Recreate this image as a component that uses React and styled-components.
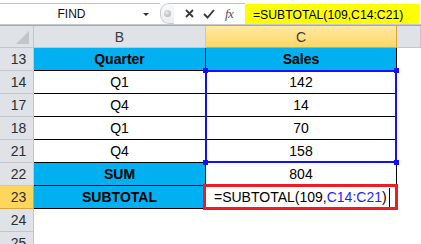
import React from 'react';
import styled, { createGlobalStyle } from 'styled-components';

const GlobalStyle = createGlobalStyle`
  html, body {
    margin: 0;
    padding: 0;
    background: #ffffff;
  }
  body {
    font-family: 'Liberation Sans', Arial, sans-serif;
    width: 421px;
    height: 244px;
    overflow: hidden;
  }
`;

const Sheet = styled.div`
  width: 421px;
  height: 244px;
  display: flex;
  flex-direction: column;
  background: #fff;
`;

const FormulaBar = styled.div`
  height: 28px;
  display: flex;
  align-items: flex-start;
  padding-top: 3px;
  box-sizing: border-box;
  border-bottom: 1px solid #a5a9af;
  background: #fff;
  position: relative;
  &::after {
    content: '';
    position: absolute;
    left: 0;
    right: 0;
    top: 24px;
    height: 1px;
    background: #c5c8cc;
  }
`;

const NameBox = styled.div`
  width: 160px;
  height: 20px;
  box-sizing: border-box;
  border-top: 1px solid #bfc2c6;
  display: flex;
  align-items: center;
  position: relative;
  font-size: 12px;
  color: #111;
`;

const NameText = styled.span`
  width: 143px;
  text-align: center;
`;

const DropArrow = styled.span`
  width: 0;
  height: 0;
  border-left: 3px solid transparent;
  border-right: 3px solid transparent;
  border-top: 3px solid #333;
  margin-top: 2px;
`;

const Grip = styled.div`
  width: 14px;
  height: 21px;
  box-sizing: border-box;
  border: 1px solid #c8cbcf;
  border-radius: 9px 0 0 9px;
  border-right: none;
  display: flex;
  align-items: center;
  justify-content: center;
  background: linear-gradient(#fafafa, #eceef0);
  &::before {
    content: '';
    width: 7px;
    height: 7px;
    border-radius: 50%;
    background: radial-gradient(circle at 40% 35%, #e8e8e8, #a9abae);
  }
`;

const Tools = styled.div`
  height: 20px;
  display: flex;
  align-items: center;
  gap: 9px;
  padding-left: 11px;
  width: 71px;
  box-sizing: border-box;
  border-top: 1px solid #bfc2c6;
`;

const ToolIcon = styled.svg`
  display: block;
`;

const Fx = styled.span`
  font-family: 'Liberation Serif', 'Times New Roman', serif;
  font-style: italic;
  font-size: 13px;
  color: #555;
  letter-spacing: -0.5px;
  margin-left: 1px;
`;

const FormulaInput = styled.div`
  flex: 1;
  height: 21px;
  margin-top: 1px;
  margin-right: 2px;
  box-sizing: border-box;
  background: #ffff00;
  font-size: 12.2px;
  color: #000;
  display: flex;
  align-items: center;
  padding-left: 8px;
`;

const GridWrap = styled.div`
  position: relative;
  flex: 1;
`;

const Grid = styled.div`
  display: grid;
  grid-template-columns: 34px 172px 191px 1fr;
  grid-template-rows: 22px repeat(9, 23px);
`;

const Corner = styled.div`
  background: #dfe2e6;
  border-right: 1px solid #c3c6cb;
  border-bottom: 1px solid #c3c6cb;
  position: relative;
  &::after {
    content: '';
    position: absolute;
    right: 4px;
    bottom: 3px;
    width: 0;
    height: 0;
    border-left: 13px solid transparent;
    border-bottom: 13px solid #c2c5ca;
  }
`;

const ColHead = styled.div`
  background: ${p => (p.$active ? 'linear-gradient(#ffe9a3, #ffd766)' : '#dfe2e6')};
  border-right: 1px solid ${p => (p.$active ? '#e0a43e' : '#c3c6cb')};
  border-bottom: 1px solid ${p => (p.$active ? '#e0a43e' : '#c3c6cb')};
  display: flex;
  align-items: center;
  justify-content: center;
  font-size: 14px;
  color: #3c3c3c;
  box-sizing: border-box;
`;

const RowHead = styled.div`
  background: ${p => (p.$active ? '#ffd65c' : '#dfe2e6')};
  border-right: 1px solid ${p => (p.$active ? '#e0a43e' : '#c3c6cb')};
  border-bottom: 1px solid ${p => (p.$active ? '#e0a43e' : '#c3c6cb')};
  display: flex;
  align-items: center;
  justify-content: center;
  font-size: 14px;
  color: #2b2f36;
  padding-left: 4px;
  box-sizing: border-box;
`;

const Cell = styled.div`
  background: ${p => (p.$head ? '#00b0f0' : '#fff')};
  border-right: ${p => (p.$plain ? 'none' : '1px solid #000')};
  border-bottom: ${p => (p.$plain ? 'none' : '1px solid #000')};
  display: flex;
  align-items: center;
  justify-content: ${p => (p.$left ? 'flex-start' : 'center')};
  padding-left: ${p => (p.$left ? '8px' : '0')};
  font-size: 14px;
  font-weight: ${p => (p.$head ? 700 : 400)};
  color: #000;
  box-sizing: border-box;
`;

const Blue = styled.span`
  color: #1f1fff;
`;

const Caret = styled.span`
  display: inline-block;
  width: 1px;
  height: 19px;
  background: #000;
  margin-left: 2px;
`;

const Selection = styled.div`
  position: absolute;
  left: 205px;
  top: 44px;
  width: 192px;
  height: 93px;
  box-sizing: border-box;
  border: 2px solid #1010ff;
  pointer-events: none;
`;

const Handle = styled.div`
  position: absolute;
  width: 5px;
  height: 5px;
  background: #1010ff;
  left: ${p => p.$x}px;
  top: ${p => p.$y}px;
`;

const EditBox = styled.div`
  position: absolute;
  left: 203px;
  top: 158px;
  width: 195px;
  height: 26px;
  box-sizing: border-box;
  border: 3px solid #ee1c24;
  pointer-events: none;
`;

const rows = [
  { n: 13, b: 'Quarter', c: 'Sales', head: true },
  { n: 14, b: 'Q1', c: '142' },
  { n: 17, b: 'Q4', c: '14' },
  { n: 18, b: 'Q1', c: '70' },
  { n: 21, b: 'Q4', c: '158' },
  { n: 22, b: 'SUM', c: '804', bHead: true },
  { n: 23, b: 'SUBTOTAL', edit: true, bHead: true, active: true },
  { n: 24, empty: true },
  { n: 25, empty: true },
];

export default function App() {
  return (
    <>
      <GlobalStyle />
      <Sheet>
        <FormulaBar>
          <NameBox>
            <NameText>FIND</NameText>
            <DropArrow />
          </NameBox>
          <Grip />
          <Tools>
            <ToolIcon width="9" height="9" viewBox="0 0 9 9">
              <path d="M1 1 L8 8 M8 1 L1 8" stroke="#3a3a3a" strokeWidth="1.8" />
            </ToolIcon>
            <ToolIcon width="12" height="10" viewBox="0 0 12 10">
              <path d="M1 5 L4.5 8.5 L11 1" stroke="#3a3a3a" strokeWidth="1.9" fill="none" />
            </ToolIcon>
            <Fx>fx</Fx>
          </Tools>
          <FormulaInput>=SUBTOTAL(109,C14:C21)</FormulaInput>
        </FormulaBar>
        <GridWrap>
          <Grid>
            <Corner />
            <ColHead>B</ColHead>
            <ColHead $active>C</ColHead>
            <ColHead />
            {rows.map(r => (
              <React.Fragment key={r.n}>
                <RowHead $active={r.active}>{r.n}</RowHead>
                {r.empty ? (
                  <>
                    <Cell $plain />
                    <Cell $plain />
                    <Cell $plain />
                  </>
                ) : (
                  <>
                    <Cell $head={r.head || r.bHead}>{r.b}</Cell>
                    {r.edit ? (
                      <Cell $left>
                        =SUBTOTAL(109,<Blue>C14:C21</Blue>)<Caret />
                      </Cell>
                    ) : (
                      <Cell $head={r.head}>{r.c}</Cell>
                    )}
                    <Cell $plain />
                  </>
                )}
              </React.Fragment>
            ))}
          </Grid>
          <Selection />
          <Handle $x={203} $y={42} />
          <Handle $x={394} $y={42} />
          <Handle $x={203} $y={134} />
          <Handle $x={394} $y={134} />
          <EditBox />
        </GridWrap>
      </Sheet>
    </>
  );
}
